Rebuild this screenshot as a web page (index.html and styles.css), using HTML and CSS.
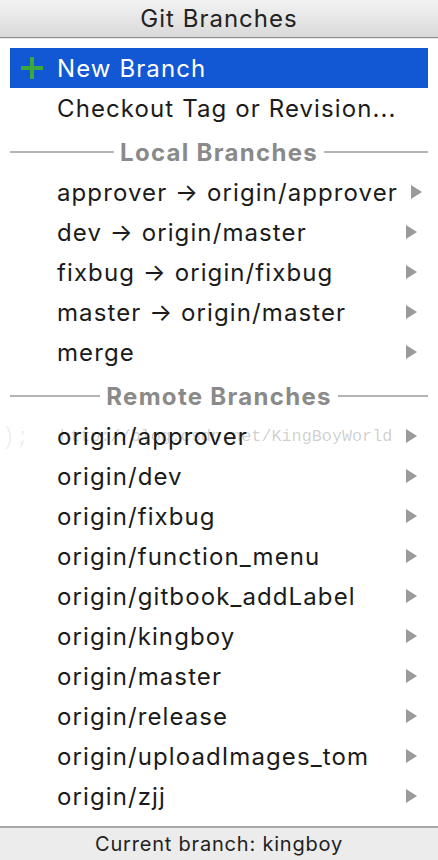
FILE: index.html
```html
<!DOCTYPE html>
<html>
<head>
<meta charset="utf-8">
<link rel="stylesheet" href="styles.css">
</head>
<body>
<div class="popup">
  <div class="header">Git Branches</div>
  <ul class="list">
    <li class="row selected">
      <span class="icon"><svg width="24" height="24" viewBox="0 0 24 24"><rect x="10" y="1" width="4" height="22" fill="#3aa83a"/><rect x="1" y="10" width="22" height="4" fill="#3aa83a"/></svg></span>
      <span class="label">New Branch</span>
      <span class="arrow"></span>
    </li>
    <li class="row">
      <span class="icon"></span>
      <span class="label">Checkout Tag or Revision...</span>
      <span class="arrow"></span>
    </li>
    <li class="sep"><span>Local Branches</span></li>
    <li class="row"><span class="icon"></span><span class="label">approver → origin/approver</span><span class="arrow sub"></span></li>
    <li class="row"><span class="icon"></span><span class="label">dev → origin/master</span><span class="arrow sub"></span></li>
    <li class="row"><span class="icon"></span><span class="label">fixbug → origin/fixbug</span><span class="arrow sub"></span></li>
    <li class="row"><span class="icon"></span><span class="label">master → origin/master</span><span class="arrow sub"></span></li>
    <li class="row"><span class="icon"></span><span class="label">merge</span><span class="arrow sub"></span></li>
    <li class="sep"><span>Remote Branches</span></li>
    <li class="row"><span class="icon"></span><span class="label">origin/approver</span><span class="arrow sub"></span></li>
    <li class="row"><span class="icon"></span><span class="label">origin/dev</span><span class="arrow sub"></span></li>
    <li class="row"><span class="icon"></span><span class="label">origin/fixbug</span><span class="arrow sub"></span></li>
    <li class="row"><span class="icon"></span><span class="label">origin/function_menu</span><span class="arrow sub"></span></li>
    <li class="row"><span class="icon"></span><span class="label">origin/gitbook_addLabel</span><span class="arrow sub"></span></li>
    <li class="row"><span class="icon"></span><span class="label">origin/kingboy</span><span class="arrow sub"></span></li>
    <li class="row"><span class="icon"></span><span class="label">origin/master</span><span class="arrow sub"></span></li>
    <li class="row"><span class="icon"></span><span class="label">origin/release</span><span class="arrow sub"></span></li>
    <li class="row"><span class="icon"></span><span class="label">origin/uploadImages_tom</span><span class="arrow sub"></span></li>
    <li class="row"><span class="icon"></span><span class="label">origin/zjj</span><span class="arrow sub"></span></li>
  </ul>
  <div class="footer">Current branch: kingboy</div>
  <div class="watermark"><span class="wm-left">);</span><span class="wm-url">http://blog.csdn.net/KingBoyWorld</span></div>
</div>
</body>
</html>
```
FILE: styles.css
```css
* { box-sizing: border-box; }
html, body { margin: 0; padding: 0; background: #fff; }
body { font-family: "Inter", "Open Sans", "Liberation Sans", sans-serif; color: #1b1b1b; }
.popup { position: relative; width: 438px; height: 860px; display: flex; flex-direction: column; overflow: hidden; }
.header {
  height: 38px;
  background: linear-gradient(#f3f3f3, #d9d9d9);
  border-bottom: 1px solid #8c8c8c;
  box-shadow: 0 1px 0 #e6e6e6;
  text-align: center;
  font-size: 24px;
  letter-spacing: 1px;
  line-height: 37px;
  color: #222;
}
.list { list-style: none; margin: 0; padding: 10px 10px 0; flex: 1; }
.row {
  height: 40px;
  display: grid;
  grid-template-columns: 24px 1fr 11px;
  column-gap: 13px;
  align-items: center;
  padding: 0 11px 0 10px;
  font-size: 24px;
  letter-spacing: 1.1px;
  white-space: nowrap;
}
.row .icon { display: flex; align-items: center; }
.row.selected { background: #1257d4; color: #fff; }
.arrow.sub {
  width: 0; height: 0;
  border-top: 7px solid transparent;
  border-bottom: 7px solid transparent;
  border-left: 11px solid #9a9a9a;
}
.sep {
  height: 44px;
  display: flex;
  align-items: center;
  gap: 6px;
  padding-top: 4px;
  font-size: 24px;
  letter-spacing: 1.3px;
  font-weight: 700;
  color: #8a8a8a;
}
.sep::before, .sep::after { content: ""; flex: 1; height: 2px; background: #b4b4b4; }
.footer {
  height: 34px;
  background: #ececec;
  border-top: 2px solid #a8a8a8;
  text-align: center;
  font-size: 20px;
  letter-spacing: 0.8px;
  line-height: 32px;
  color: #222;
}
.watermark {
  position: absolute;
  top: 424px;
  left: 0;
  right: 0;
  height: 28px;
  font-family: "Liberation Mono", monospace;
  color: rgba(0, 0, 0, 0.2);
  pointer-events: none;
  white-space: nowrap;
}
.wm-left { position: absolute; left: 1px; top: 0; font-size: 24px; color: rgba(0,0,0,0.07); }
.wm-url { position: absolute; left: 60px; top: 3px; font-size: 16.8px; }
```
